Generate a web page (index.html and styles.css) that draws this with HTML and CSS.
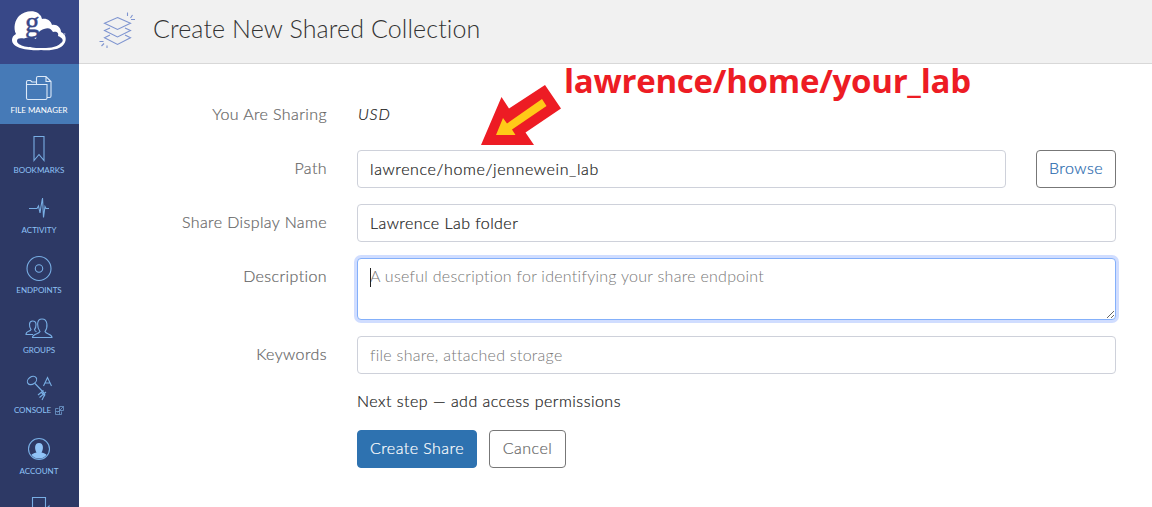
FILE: index.html
```html
<!DOCTYPE html>
<html lang="en">
<head>
<meta charset="utf-8">
<title>Create New Shared Collection</title>
<link rel="stylesheet" href="styles.css">
</head>
<body>
<div class="app">
  <nav class="sidebar">
    <a class="logo">
      <svg width="79" height="64" viewBox="0 0 79 64">
        <path fill="#fff" d="M16 34C13 28 15 20 19 16C24 11 33 10 38 13Q41 15 42 19C47 18 51 21 52 25C57 24 61 28 61 32C66 34 67 40 64 44C61 49 52 51 41 50C27 51 12 48 12 40Q12 36 16 34Z"/>
        <path fill="#384888" d="M24 38.500C29 36.500 33 37 36 39C37 33 40 30 44 29C49 27 51 29 53 32C57 31 59 33 58 36C63 38 64 41 61 43C56 48 48 48 40 48C30 48 17 46 17 41C17 38 20 38 24 38.500Z"/>
        <text class="logo-g" x="25" y="32">g</text>
        <circle cx="64.500" cy="34" r="1" fill="#8e97bd"/>
      </svg>
    </a>
    <a class="nav-item active">
      <svg class="icon" width="40" height="30" viewBox="0 0 40 30"><path d="M7.500 24V8Q7.500 6.500 9 6.500h2.500l1.500 1.500h4M7.500 10.500H28v13.500Q28 25.500 26.500 25.500H9Q7.500 25.500 7.500 24M17.500 10V4Q17.500 2.500 19 2.500h8l5 5v14.500Q32 23.500 30.500 23.500H28M27 2.500v5h5M28.500 4l2.500 3"/></svg>
      <span>FILE MANAGER</span>
    </a>
    <a class="nav-item">
      <svg class="icon" width="40" height="30" viewBox="0 0 40 30"><path d="M15 2.500h10v24l-5-6-5 6z"/></svg>
      <span>BOOKMARKS</span>
    </a>
    <a class="nav-item">
      <svg class="icon" width="40" height="30" viewBox="0 0 40 30"><path d="M10 14.500h8l1.500-2.500L21 19l1-6.500 1.500-8.500 1 19.500 1.500-11 1 2H30"/></svg>
      <span>ACTIVITY</span>
    </a>
    <a class="nav-item">
      <svg class="icon" width="40" height="30" viewBox="0 0 40 30"><circle cx="20" cy="14.500" r="12"/><circle cx="20" cy="14.500" r="3.700"/></svg>
      <span>ENDPOINTS</span>
    </a>
    <a class="nav-item">
      <svg class="icon" width="40" height="30" viewBox="0 0 40 30"><path d="M13.500 23.500c0-4 6-3 7.500-6-3-4-4-12.500 2-12.500s6 8.500 3 12.500c1 3 7 2 7 6zM14 20.500H7c0-4 4-2.500 5-5-2-3-2.500-8.500 1.500-8.500 2 0 3.500 1 3.500 3.500 0 2-.5 4-1.500 5 .3 1.500 1 2 2 2.300"/></svg>
      <span>GROUPS</span>
    </a>
    <a class="nav-item">
      <svg class="icon" width="40" height="30" viewBox="0 0 40 30"><ellipse cx="13" cy="6.500" rx="5" ry="3.700" transform="rotate(-35 13 6.500)"/><path d="M16 9.500l9 9.500M19 21l5.500-4.500M20.500 23.500l6.500-5.500M23 26l3-6M22 18l4 4M24.500 12l4-8.500 4 8.500M26 9h5"/></svg>
      <span>CONSOLE</span><svg class="ext" width="9" height="9" viewBox="0 0 9 9"><path d="M3.500 2.500h-3v6h6v-3M2.500 6.500l6-6M4.500.5h4v4h-4zM4.500 4.500v4M.5 5.500h4"/></svg>
    </a>
    <a class="nav-item account">
      <svg class="icon" width="40" height="30" viewBox="0 0 40 30"><circle cx="20" cy="14" r="10.500"/><path class="solid" d="M12.500 20Q13 18.500 17.500 17.500C15.500 14.500 15 8 20 8s4.500 6.500 2.500 9.500Q27 18.500 27.500 20Q24.500 23.500 20 23.500T12.500 20Z"/></svg>
      <span>ACCOUNT</span>
    </a>
    <a class="nav-item">
      <svg class="icon" width="40" height="30" viewBox="0 0 40 30"><path d="M13.500 24V3.500h13V24M28 14l2-2v8z"/></svg>
    </a>
  </nav>
  <main class="content">
    <header class="topbar">
      <svg class="layers" width="38" height="38" viewBox="0 0 38 38"><path d="M18.500 5.500l13 5.700-13 6.300-13-6.300zM11 16l-5.500 2.500 13 6.500 13-6.500L26 16M11 23l-5.500 2.700 13 6.800 13-6.800L26 23M28.500.5V4M33.500 3l-2 3M36 7.500h-4M.5 29.500h4M5 31.500L2.500 34M8 33.500V36"/></svg>
      <h1>Create New Shared Collection</h1>
    </header>
    <form class="form">
      <label>You Are Sharing</label><em class="usd">USD</em>
      <label>Path</label>
      <div class="path-row"><input class="path" value="lawrence/home/jennewein_lab"><button type="button" class="btn browse">Browse</button></div>
      <label>Share Display Name</label><input value="Lawrence Lab folder">
      <label>Description</label>
      <div class="desc"><textarea placeholder="A useful description for identifying your share endpoint"></textarea><i class="caret"></i></div>
      <label>Keywords</label><input placeholder="file share, attached storage">
      <p class="next">Next step — add access permissions</p>
      <div class="actions"><button type="button" class="btn primary">Create Share</button><button type="button" class="btn cancel">Cancel</button></div>
    </form>
  </main>
  <svg class="arrow" width="82" height="62" viewBox="0 0 82 62"><path fill="#ed1c24" d="M0 61L20.500 13 28 24.500 64 1l16 23.500L44.500 48.500 53 61z"/><path fill="#ffca18" d="M15 51l7-17 4 5.500L61 15l4.500 7L31 45.500l3.500 5.500z"/></svg>
  <strong class="note">lawrence/home/your_lab</strong>
</div>
</body>
</html>
```
FILE: styles.css
```css
* { box-sizing: border-box; }
body { margin: 0; background: #fff; font-family: Lato, "Open Sans", sans-serif; font-size: 16px; font-weight: 300; }
.app { position: relative; display: flex; width: 1152px; height: 507px; overflow: hidden; }
.sidebar { width: 79px; flex: none; background: #2d3965; overflow: hidden; }
.logo { display: block; height: 64px; background: #384888; }
.logo-g { font: 29px "Liberation Serif", serif; fill: #384888; stroke: #384888; stroke-width: .4px; }
.nav-item { display: block; height: 60px; padding: 10px 1px 0 0; text-align: center; color: #90c3f7; font-size: 8px; font-weight: 400; line-height: 12px; white-space: nowrap; }
.active { background: #467ab7; color: #fff; }
.account { padding-top: 11px; }
.icon { display: block; margin: 0 auto; fill: none; stroke: #78aee4; stroke-width: 1.1px; }
.active .icon { stroke: #dce9f8; }
.icon .solid { fill: #90c3f7; stroke: none; }
.ext { margin-left: 4px; vertical-align: -2px; fill: none; stroke: #6f9bcb; stroke-width: .8px; }
.content { flex: 1; }
.topbar { display: flex; align-items: center; gap: 15px; height: 64px; padding: 0 0 8px 21px; background: #f1f1f1; border-bottom: 1px solid #d8d8d8; }
.layers { position: relative; left: -1px; top: 3px; fill: none; stroke: #7e94d0; stroke-width: 1.1px; }
h1 { margin: 0; font-size: 25px; font-weight: 300; color: #333; letter-spacing: .12px; }
.form { display: grid; grid-template-columns: 248px 759px; column-gap: 30px; row-gap: 16px; grid-template-rows: 38px 38px 38px 62px 38px; padding-top: 32px; color: #222; letter-spacing: .4px; -webkit-text-stroke: .2px; }
label { color: #666; text-align: right; line-height: 36px; }
.usd { line-height: 36px; padding-left: 1px; letter-spacing: .8px; }
.path-row { display: flex; gap: 30px; }
input, textarea { display: block; width: 100%; height: 38px; margin: 0; padding: 0 12px 2px; border: 1px solid #ced1da; border-radius: 4px; color: #222; background: #fff; font: inherit; letter-spacing: .44px; outline: none; }
.path { flex: 1; letter-spacing: .61px; }
::placeholder { color: #777; opacity: 1; letter-spacing: .27px; -webkit-text-stroke: 0; }
.desc { position: relative; }
textarea { height: 62px; padding: 5px 12px; line-height: 24px; border-color: #84b0fa; box-shadow: 0 0 0 3px #d0ddff; }
.caret { position: absolute; left: 13px; top: 10px; width: 1px; height: 19px; background: #222; }
.next { grid-column: 2; margin: -1px 0 1px; line-height: 24px; letter-spacing: .48px; }
.actions { grid-column: 2; display: flex; gap: 12px; }
.btn { flex: none; height: 38px; padding: 0 0 3px; border: 1px solid #777; border-radius: 4px; background: #fff; font: inherit; letter-spacing: .45px; color: #666; }
.browse { width: 80px; color: #2869ae; }
.primary { width: 120px; background: #2e72b0; border-color: #2e72b0; color: #fff; }
.cancel { width: 77px; }
.arrow { position: absolute; left: 481px; top: 84px; }
.note { position: absolute; left: 564px; top: 59px; font: 700 33px/44px "Open Sans", sans-serif; letter-spacing: -.26px; color: #ed1c24; white-space: nowrap; }
```
